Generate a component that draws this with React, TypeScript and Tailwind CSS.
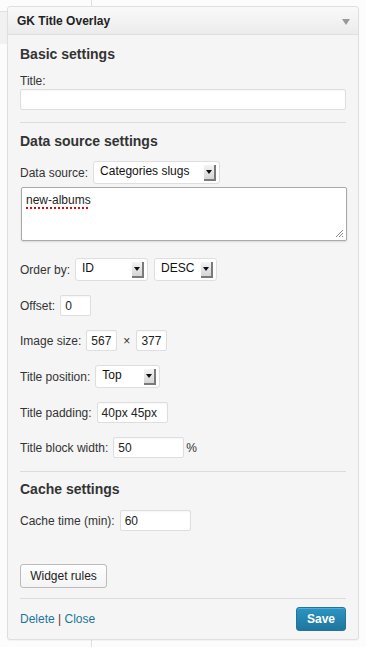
import React from "react";

function Arrow() {
  return (
    <div className="w-[12px] h-[16px] bg-gradient-to-b from-[#f4f4f4] to-[#d6d6d6] border-r-[2px] border-b-[2px] border-[#7a7a7a] flex items-center justify-center">
      <svg width="6" height="4" viewBox="0 0 6 4">
        <path d="M0 0 L6 0 L3 4 Z" fill="#111" />
      </svg>
    </div>
  );
}

function Sel({ text, cls }: { text: string; cls: string }) {
  return (
    <div className={`flex items-center justify-between h-[23px] bg-white border border-[#dedede] rounded-[3px] pl-[6px] pr-[3px] text-[12px] text-[#111] ${cls}`}>
      <span className="-mt-[3px]">{text}</span>
      <Arrow />
    </div>
  );
}

function Inp({ value, cls }: { value: string; cls: string }) {
  return (
    <div className={`h-[21px] bg-white border border-[#dedede] rounded-[2px] shadow-[inset_0_1px_2px_rgba(0,0,0,0.04)] pl-[4px] flex items-center text-[12px] text-[#222] ${cls}`}>
      {value}
    </div>
  );
}

export default function App() {
  return (
    <div
      className="relative w-[366px] h-[647px] bg-[#fcfcfc] overflow-hidden text-[#333]"
      style={{ fontFamily: '"Liberation Sans", Arial, sans-serif' }}
    >
      {/* underlying panels */}
      <div className="absolute left-0 top-[11px] w-[92px] h-[33px] bg-[#f1f1f1] border-t border-r border-[#dfdfdf]" />
      <div className="absolute left-[91px] top-0 w-px h-[12px] bg-[#dfdfdf]" />
      <div className="absolute left-[91px] top-[638px] w-px h-[12px] bg-[#dfdfdf]" />

      <div className="relative ml-[7px] mt-[6px] w-[352px] bg-[#f5f5f5] border border-[#dfdfdf] rounded-[3px] shadow-[0_1px_1px_rgba(0,0,0,0.04)]">
        {/* header */}
        <div className="h-[28px] flex items-center justify-between pl-[9px] pr-[8px] bg-gradient-to-b from-[#f9f9f9] to-[#ececec] border-b border-[#dfdfdf] rounded-t-[3px]">
          <span className="text-[12px] font-bold text-[#222]">GK Title Overlay</span>
          <svg width="8" height="6" viewBox="0 0 8 6" className="mt-[3px]">
            <path d="M0 0 L8 0 L4 6 Z" fill="#999" />
          </svg>
        </div>

        <div className="px-[12px] pt-[10px] pb-[8px]">
          <div className="text-[14px] font-bold leading-[18px] text-[#333]">Basic settings</div>
          <div className="mt-[10px] text-[12px] leading-[16px]">Title:</div>
          <Inp value="" cls="w-[326px]" />
          <div className="mt-[12px] h-px bg-[#dcdcdc]" />

          <div className="mt-[9px] text-[14px] font-bold leading-[18px] text-[#333]">Data source settings</div>
          <div className="mt-[11px] flex items-center gap-[5px] text-[12px]">
            <span>Data source:</span>
            <Sel text="Categories slugs" cls="w-[127px]" />
          </div>
          <div className="relative mt-[3px] ml-[1px] w-[326px] h-[54px] bg-white border border-[#a9a9a9] rounded-[2px] shadow-[0_1px_2px_rgba(0,0,0,0.12)] px-[4px] pt-[3px] text-[12px] text-[#222]">
            <span className="underline decoration-dotted decoration-[#e00] decoration-[2px] underline-offset-[3px]">new-albums</span>
            <svg width="10" height="10" viewBox="0 0 10 10" className="absolute right-[2px] bottom-[2px]">
              <path d="M9 2 L2 9 M9 5 L5 9 M9 8 L8 9" stroke="#888" strokeWidth="1" />
            </svg>
          </div>

          <div className="mt-[17px] flex items-center text-[12px]">
            <span>Order by:</span>
            <Sel text="ID" cls="ml-[5px] w-[73px]" />
            <Sel text="DESC" cls="ml-[6px] w-[63px]" />
          </div>

          <div className="mt-[14px] flex items-center gap-[5px] text-[12px]">
            <span>Offset:</span>
            <Inp value="0" cls="w-[31px]" />
          </div>

          <div className="mt-[14px] flex items-center text-[12px]">
            <span>Image size:</span>
            <Inp value="567" cls="ml-[5px] w-[31px]" />
            <span className="mx-[6px]">×</span>
            <Inp value="377" cls="w-[31px]" />
          </div>

          <div className="mt-[14px] flex items-center gap-[5px] text-[12px]">
            <span>Title position:</span>
            <Sel text="Top" cls="w-[65px]" />
          </div>

          <div className="mt-[14px] flex items-center gap-[5px] text-[12px]">
            <span>Title padding:</span>
            <Inp value="40px 45px" cls="w-[71px]" />
          </div>

          <div className="mt-[14px] flex items-center text-[12px]">
            <span>Title block width:</span>
            <Inp value="50" cls="ml-[5px] w-[71px]" />
            <span className="ml-[2px]">%</span>
          </div>

          <div className="mt-[13px] h-px bg-[#dcdcdc]" />

          <div className="mt-[8px] text-[14px] font-bold leading-[18px] text-[#333]">Cache settings</div>
          <div className="mt-[12px] flex items-center gap-[5px] text-[12px]">
            <span>Cache time (min):</span>
            <Inp value="60" cls="w-[71px]" />
          </div>

          <div className="mt-[33px] w-[87px] h-[24px] flex items-center justify-center bg-gradient-to-b from-[#fefefe] to-[#f4f4f4] border border-[#bbb] rounded-[3px] text-[12px] text-[#222] shadow-[0_1px_0_rgba(255,255,255,0.8)_inset]">
            Widget rules
          </div>

          <div className="mt-[10px] h-px bg-[#dcdcdc]" />

          <div className="mt-[8px] flex items-center justify-between">
            <div className="text-[12px] text-[#21759b]">
              Delete <span className="text-[#7a2a2a]">|</span> Close
            </div>
            <div className="w-[50px] h-[24px] flex items-center justify-center rounded-[3px] border border-[#21759b] bg-gradient-to-b from-[#2a95c5] to-[#21759b] text-white text-[12px] font-bold shadow-[inset_0_1px_0_rgba(120,200,230,0.5)]">
              Save
            </div>
          </div>
        </div>
      </div>
    </div>
  );
}
